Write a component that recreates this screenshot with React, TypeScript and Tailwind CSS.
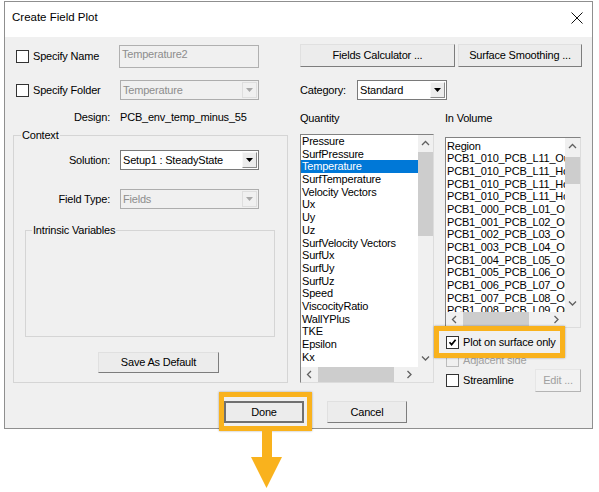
import React from "react";

const F = "font-['Liberation_Sans',Arial,sans-serif]";

function Chev({ d, c = "#606060" }: { d: "u" | "d" | "l" | "r"; c?: string }) {
  const pts = {
    u: "1,5 4.5,1.5 8,5",
    d: "1,1.5 4.5,5 8,1.5",
    l: "5,1 1.5,4.5 5,8",
    r: "1.5,1 5,4.5 1.5,8",
  }[d];
  const v = d === "u" || d === "d";
  const w = v ? 9 : 6.5;
  const h = v ? 6.5 : 9;
  return (
    <svg width={w} height={h} viewBox={`0 0 ${w} ${h}`}>
      <polyline points={pts} fill="none" stroke={c} strokeWidth="1.3" />
    </svg>
  );
}

function Check({ on, dis }: { on?: boolean; dis?: boolean }) {
  return (
    <div
      className={`w-[13px] h-[13px] border shrink-0 flex items-center justify-center ${
        dis ? "border-[#bcbcbc] bg-[#f0f0f0]" : "border-[#333333] bg-white"
      }`}
    >
      {on && (
        <svg width="9" height="9" viewBox="0 0 9 9">
          <polyline points="1.5,4.3 3.6,6.6 7.6,1.8" fill="none" stroke="#000" strokeWidth="1.7" />
        </svg>
      )}
    </div>
  );
}

function Combo({ w, text, dis }: { w: string; text: string; dis?: boolean }) {
  return (
    <div
      className={`${w} h-[20px] flex border ${
        dis ? "border-[#adadad] bg-[#f0f0f0] text-[#8d8d8d]" : "border-[#7a7a7a] bg-white text-black"
      }`}
    >
      <div className="flex-1 flex items-center pl-[2px] whitespace-nowrap overflow-hidden">{text}</div>
      <div
        className={`w-[15px] m-[1px] flex items-center justify-center border ${
          dis
            ? "border-[#dedede] bg-[#f0f0f0]"
            : "border-t-[#f8f8f8] border-l-[#f8f8f8] border-r-[#8a8a8a] border-b-[#8a8a8a] bg-[#ececec]"
        }`}
      >
        <svg width="7" height="4" viewBox="0 0 7 4">
          <polygon points="0,0 7,0 3.5,4" fill={dis ? "#a8a8a8" : "#000"} />
        </svg>
      </div>
    </div>
  );
}

function Btn({
  cls,
  children,
  dis,
  def,
}: {
  cls: string;
  children: React.ReactNode;
  dis?: boolean;
  def?: boolean;
}) {
  const b = def
    ? "border-2 border-[#707070]"
    : dis
    ? "border border-t-[#e6e6e6] border-l-[#e6e6e6] border-r-[#b4b4b4] border-b-[#b4b4b4]"
    : "border border-t-[#e0e0e0] border-l-[#e0e0e0] border-r-[#7d7d7d] border-b-[#7d7d7d]";
  return (
    <div
      className={`${cls} ${b} shrink-0 flex items-center justify-center whitespace-nowrap ${
        dis ? "bg-[#f2f2f2] text-[#a0a0a0]" : "bg-[#ececec] text-black"
      }`}
    >
      {children}
    </div>
  );
}

function ListBox({
  box,
  items,
  selected,
  vThumb,
  hThumb,
  pad,
}: {
  box: string;
  items: string[];
  selected?: number;
  vThumb: string;
  hThumb: string;
  pad: string;
}) {
  return (
    <div
      className={`${box} shrink-0 flex flex-col bg-white border border-t-[#828282] border-l-[#828282] border-r-[#dcdcdc] border-b-[#dcdcdc]`}
    >
      <div className="flex flex-1 min-h-0">
        <div className={`flex-1 min-w-0 overflow-hidden ${pad}`}>
          {items.map((t, i) => (
            <div
              key={i}
              className={`h-[12.7px] leading-[12.7px] whitespace-nowrap pl-[1px] ${
                i === selected ? "bg-[#0078d7] text-white" : ""
              }`}
            >
              {t}
            </div>
          ))}
        </div>
        <div className="w-[15px] flex flex-col bg-[#f0f0f0]">
          <div className="h-[17px] flex items-center justify-center">
            <Chev d="u" />
          </div>
          <div className="flex-1">
            <div className={`${vThumb} w-full bg-[#cdcdcd]`} />
          </div>
          <div className="h-[17px] flex items-center justify-center">
            <Chev d="d" />
          </div>
        </div>
      </div>
      <div className="h-[15px] flex bg-[#f0f0f0]">
        <div className="flex-1 flex">
          <div className="w-[17px] flex items-center justify-center">
            <Chev d="l" />
          </div>
          <div className={`${hThumb} h-full bg-[#cdcdcd]`} />
          <div className="flex-1" />
          <div className="w-[17px] flex items-center justify-center">
            <Chev d="r" />
          </div>
        </div>
        <div className="w-[15px]" />
      </div>
    </div>
  );
}

const quantity = [
  "Pressure",
  "SurfPressure",
  "Temperature",
  "SurfTemperature",
  "Velocity Vectors",
  "Ux",
  "Uy",
  "Uz",
  "SurfVelocity Vectors",
  "SurfUx",
  "SurfUy",
  "SurfUz",
  "Speed",
  "ViscocityRatio",
  "WallYPlus",
  "TKE",
  "Epsilon",
  "Kx",
];

const volume = [
  "Region",
  "PCB1_010_PCB_L11_Outline",
  "PCB1_010_PCB_L11_Hole1",
  "PCB1_010_PCB_L11_Hole2",
  "PCB1_010_PCB_L11_Hole3",
  "PCB1_000_PCB_L01_Outline",
  "PCB1_001_PCB_L02_Outline",
  "PCB1_002_PCB_L03_Outline",
  "PCB1_003_PCB_L04_Outline",
  "PCB1_004_PCB_L05_Outline",
  "PCB1_005_PCB_L06_Outline",
  "PCB1_006_PCB_L07_Outline",
  "PCB1_007_PCB_L08_Outline",
  "PCB1_008_PCB_L09_Outline",
];

export default function App() {
  return (
    <div className={`relative w-[599px] h-[492px] bg-white overflow-hidden ${F} text-[11px] tracking-[-0.2px] text-black`}>
      <div className="ml-[4px] mt-[1px] w-[589px] h-[428px] border border-[#8f8f8f] flex flex-col">
        {/* title bar */}
        <div className="h-[35px] shrink-0 bg-white flex items-center justify-between pl-[7px] pr-[9px] pb-[3px]">
          <span className="text-[11.5px] tracking-normal">Create Field Plot</span>
          <svg width="12" height="12" viewBox="0 0 12 12">
            <line x1="0.5" y1="0.5" x2="11.5" y2="11.5" stroke="#111" strokeWidth="1" />
            <line x1="11.5" y1="0.5" x2="0.5" y2="11.5" stroke="#111" strokeWidth="1" />
          </svg>
        </div>

        {/* body */}
        <div className="flex-1 bg-[#f0f0f0] flex flex-col">
          <div className="flex items-start h-[355px]">
            {/* left column */}
            <div className="ml-[8px] w-[275px] flex flex-col pt-[8px]">
              <div className="flex items-center h-[23px]">
                <div className="w-[106px] flex items-center pl-[3px]">
                  <Check />
                  <span className="ml-[4px]">Specify Name</span>
                </div>
                <div className="w-[140px] h-[23px] border border-[#b0b0b0] bg-[#f0f0f0] text-[#8d8d8d] pl-[2px] pt-[2px] leading-[13px]">
                  Temperature2
                </div>
              </div>
              <div className="flex items-center h-[20px] mt-[12px]">
                <div className="w-[107px] flex items-center pl-[3px]">
                  <Check />
                  <span className="ml-[4px]">Specify Folder</span>
                </div>
                <Combo w="w-[139px]" text="Temperature" dis />
              </div>
              <div className="flex items-center h-[18px] mt-[8px]">
                <div className="w-[97px] text-right">Design:</div>
                <div className="ml-[10px]">PCB_env_temp_minus_55</div>
              </div>

              {/* Context group */}
              <div className="relative mt-[9px] h-[248px] border border-[#d5d5d5] flex flex-col">
                <span className="absolute left-[7px] -top-[8px] bg-[#f0f0f0] px-[1px] leading-[14px]">Context</span>
                <div className="flex items-center h-[20px] mt-[14px]">
                  <div className="w-[96px] text-right">Solution:</div>
                  <div className="ml-[10px]">
                    <Combo w="w-[139px]" text="Setup1 : SteadyState" />
                  </div>
                </div>
                <div className="flex items-center h-[20px] mt-[19px]">
                  <div className="w-[96px] text-right">Field Type:</div>
                  <div className="ml-[10px]">
                    <Combo w="w-[139px]" text="Fields" dis />
                  </div>
                </div>
                <div className="relative mt-[21px] ml-[11px] w-[250px] h-[107px] border border-[#d5d5d5]">
                  <span className="absolute left-[6px] -top-[8px] bg-[#f0f0f0] px-[1px] leading-[14px]">
                    Intrinsic Variables
                  </span>
                </div>
                <div className="mt-[15px] ml-[84px]">
                  <Btn cls="w-[121px] h-[21px]">Save As Default</Btn>
                </div>
              </div>
            </div>

            {/* right column */}
            <div className="ml-[12px] w-[282px] flex flex-col pt-[7px]">
              <div className="flex h-[23px]">
                <Btn cls="w-[155px] h-[23px]">Fields Calculator ...</Btn>
                <Btn cls="ml-[3px] w-[124px] h-[23px]">Surface Smoothing ...</Btn>
              </div>
              <div className="flex items-center h-[20px] mt-[13px]">
                <span className="w-[57px]">Category:</span>
                <Combo w="w-[90px]" text="Standard" />
              </div>
              <div className="flex items-center h-[14px] mt-[11px]">
                <span className="w-[145px]">Quantity</span>
                <span>In Volume</span>
              </div>
              <div className="flex items-start mt-[9px]">
                <ListBox
                  box="w-[134px] h-[249px]"
                  items={quantity}
                  selected={2}
                  vThumb="h-[84px]"
                  hThumb="w-[76px]"
                  pad="pt-[0px]"
                />
                <div className="ml-[11px] w-[136px] flex flex-col mt-[3px]">
                  <ListBox
                    box="w-[136px] h-[191px]"
                    items={volume}
                    vThumb="mt-[2px] h-[27px]"
                    hThumb="w-[66px]"
                    pad="pt-[1.5px]"
                  />
                  <div className="flex items-center h-[14px] mt-[7px] pl-[1px]">
                    <Check on />
                    <span className="ml-[4px]">Plot on surface only</span>
                  </div>
                  <div className="flex items-center h-[14px] mt-[4px] pl-[1px]">
                    <Check dis />
                    <span className="ml-[4px] text-[#a0a0a0]">Adjacent side</span>
                  </div>
                  <div className="flex items-center h-[23px] mt-[2px] pl-[1px]">
                    <Check />
                    <span className="ml-[4px]">Streamline</span>
                    <div className="ml-auto">
                      <Btn cls="w-[46px] h-[23px]" dis>
                        Edit ...
                      </Btn>
                    </div>
                  </div>
                </div>
              </div>
            </div>
          </div>

          {/* bottom buttons */}
          <div className="flex mt-[9px] h-[22px]">
            <Btn cls="ml-[219px] w-[80px] h-[22px]" def>
              Done
            </Btn>
            <Btn cls="ml-[23px] w-[80px] h-[22px]">Cancel</Btn>
          </div>
        </div>
      </div>

      {/* orange annotations */}
      <div className="absolute left-[434px] top-[326px] w-[131px] h-[32px] border-[5px] border-[#f9b21d] shadow-[0_0_2px_rgba(0,0,0,0.35)]" />
      <div className="absolute left-[219px] top-[392px] w-[93px] h-[39px] border-[5px] border-[#f9b21d] shadow-[0_0_2px_rgba(0,0,0,0.35)]" />
      <svg className="absolute left-[250px] top-[430px]" width="33" height="60" viewBox="0 0 33 60">
        <rect x="12" y="0" width="10" height="28" fill="#f9b21d" />
        <polygon points="1,27 32,27 16.5,58" fill="#f9b21d" />
      </svg>
    </div>
  );
}
